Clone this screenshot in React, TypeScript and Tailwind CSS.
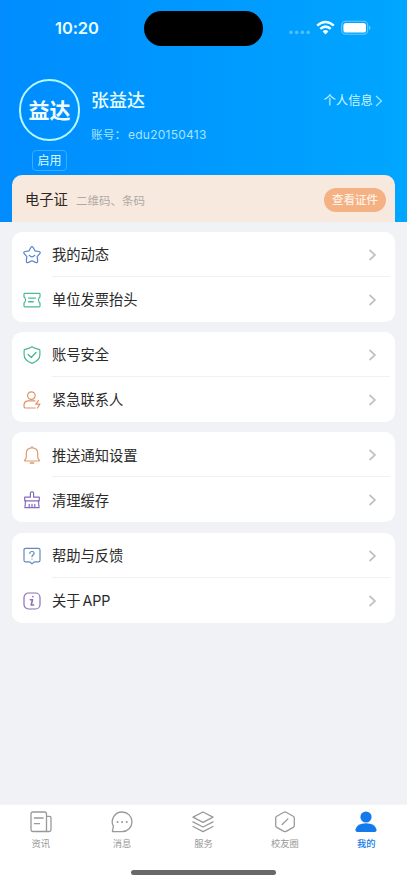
import React from 'react'

interface MenuItem {
  label: string
  icon: React.ReactNode
}

interface TabItem {
  label: string
  icon: React.ReactNode
  active?: boolean
}

function Icon({ children, color }: { children: React.ReactNode; color: string }) {
  return (
    <svg
      className="h-[18px] w-[18px] shrink-0"
      viewBox="0 0 18 18"
      fill="none"
      stroke={color}
      strokeWidth="1.2"
      strokeLinecap="round"
      strokeLinejoin="round"
    >
      {children}
    </svg>
  )
}

const menuIcons = {
  star: (
    <Icon color="#5b80cf">
      <path d="M7.8 1.5Q9 -.3 10.2 1.5L11.9 4.8 15.9 5.5Q18.1 6.2 16.6 7.9L14.1 10.7 14.7 14.8Q14.7 17.2 12.6 16.4L9 14.8 5.4 16.4Q3.3 17.2 3.3 14.8L3.9 10.7 1.4 7.9Q-.1 6.2 2.1 5.5L6.1 4.8Z" />
      <path d="M6.4 9.4Q9 12.4 11.6 9.4" strokeWidth="1.4" />
    </Icon>
  ),
  ticket: (
    <Icon color="#4cb895">
      <path d="M1.8 2.3H16.2Q17 2.3 17 3.1V5.6Q16.9 6.4 16 7 14.8 8.9 16 11 16.9 11.6 17 12.4V15Q17 15.8 16.2 15.8H1.8Q1 15.8 1 15V12.4Q1.1 11.6 2 11 3.2 8.9 2 7 1.1 6.4 1 5.6V3.1Q1 2.3 1.8 2.3Z" />
      <path d="M5.6 7.1H12.4M5.6 10.7H10.2" strokeWidth="1.4" />
    </Icon>
  ),
  shield: (
    <Icon color="#4cb895">
      <path d="M9 .7Q12 2.7 16 3.3 16.9 3.5 16.9 4.4V8.8C16.9 13 13.2 15.9 9 17.4 4.8 15.9 1.1 13 1.1 8.8V4.4Q1.1 3.5 2 3.3 6 2.7 9 .7Z" />
      <path d="M5.2 8.6 8.3 11.5 13 6.6" strokeWidth="1.4" />
    </Icon>
  ),
  contact: (
    <Icon color="#e0916a">
      <circle cx="8.4" cy="4.6" r="3.8" />
      <path d="M12 9.8H4.8Q1 10.2 1 14.4V15.4Q1 17 2.8 17H12.2" />
      <path d="M15.4 9.6 12.8 13.2H16.9L14.4 17" />
    </Icon>
  ),
  bell: (
    <Icon color="#dc9970">
      <path d="M1.9 15Q1.1 15 1.8 14.2 3.3 12.6 3.3 10.6V7.4Q3.3 1.8 9 1.8T14.7 7.4V10.6Q14.7 12.6 16.2 14.2 16.9 15 16.1 15Z" />
      <path d="M9 .8V1.6M7.3 17H10.7" strokeWidth="1.4" />
    </Icon>
  ),
  brush: (
    <Icon color="#8869bd">
      <path d="M7.4 6.2V2Q7.4 .9 9 .9T10.6 2V6.2H16.3V9.8H1.7V6.2Z" />
      <path d="M2.6 9.8 1.9 16.7H16.1L15.4 9.8M6.2 16.5V13.4M9 16.5V13.4M11.8 16.5V13.4" />
    </Icon>
  ),
  help: (
    <Icon color="#648abd">
      <path d="M2.6 1.3H15.4Q17 1.3 17 2.9V13.2Q17 14.8 15.4 14.8H11.6L9 16.8 6.4 14.8H2.6Q1 14.8 1 13.2V2.9Q1 1.3 2.6 1.3Z" />
      <path d="M6.8 6.5Q6.9 4.5 9 4.5T11.2 6.3Q11.2 7.4 9.9 8.1 9 8.6 9 9.7M9 12V12.1" />
    </Icon>
  ),
  about: (
    <Icon color="#8c6fb8">
      <rect x="1" y="1" width="16" height="16" rx="4.5" />
      <path d="M9.9 4.6V4.7M7.3 7.8H9.5L8.2 13H10.6" strokeWidth="1.6" />
    </Icon>
  ),
}

const menuGroups: MenuItem[][] = [
  [
    { label: '我的动态', icon: menuIcons.star },
    { label: '单位发票抬头', icon: menuIcons.ticket },
  ],
  [
    { label: '账号安全', icon: menuIcons.shield },
    { label: '紧急联系人', icon: menuIcons.contact },
  ],
  [
    { label: '推送通知设置', icon: menuIcons.bell },
    { label: '清理缓存', icon: menuIcons.brush },
  ],
  [
    { label: '帮助与反馈', icon: menuIcons.help },
    { label: '关于 APP', icon: menuIcons.about },
  ],
]

function TabIcon({ children }: { children: React.ReactNode }) {
  return (
    <svg
      className="h-[22px] w-[22px]"
      viewBox="0 0 22 22"
      fill="none"
      stroke="currentColor"
      strokeWidth="1.3"
      strokeLinecap="round"
      strokeLinejoin="round"
    >
      {children}
    </svg>
  )
}

const tabs: TabItem[] = [
  {
    label: '资讯',
    icon: (
      <TabIcon>
        <path d="M16.5 20.5H3Q1 20.5 1 18.5V3Q1 1 3 1H14.5Q16.5 1 16.5 3V20.5H19.3Q21 20.5 21 18.8V7Q21 5.3 19.3 5.3H16.5" />
        <path d="M4.4 7H13.2M4.4 12.7H9.5" />
      </TabIcon>
    ),
  },
  {
    label: '消息',
    icon: (
      <TabIcon>
        <path d="M11.2 1A9.8 9.8 0 1 1 11.2 20.6H2Q1.2 20.6 1.5 19.8L2.4 15.4A9.8 9.8 0 0 1 11.2 1Z" />
        <path d="M6.5 11H6.6M11.1 11H11.2M15.7 11H15.8" strokeWidth="1.9" />
      </TabIcon>
    ),
  },
  {
    label: '服务',
    icon: (
      <TabIcon>
        <path d="M11 1 21 6.2 11 11.4 1 6.2ZM1 10.8 11 16 21 10.8M1 15.5 11 20.7 21 15.5" />
      </TabIcon>
    ),
  },
  {
    label: '校友圈',
    icon: (
      <TabIcon>
        <path d="M9.9 1.3Q11 .7 12.1 1.3L19.2 5.2Q20.3 5.8 20.3 7V14.6Q20.3 15.8 19.2 16.4L12.1 20.4Q11 21 9.9 20.4L2.8 16.4Q1.7 15.8 1.7 14.6V7Q1.7 5.8 2.8 5.2Z" />
        <path d="M8.2 13.5 13.9 7.9" />
      </TabIcon>
    ),
  },
  {
    label: '我的',
    active: true,
    icon: (
      <TabIcon>
        <g fill="currentColor" stroke="none">
          <circle cx="11" cy="6" r="5.6" />
          <path d="M.6 18.3Q2 12.3 11 12.3T21.4 18.3Q22 21 19.5 21H2.5Q0 21 .6 18.3Z" />
        </g>
      </TabIcon>
    ),
  },
]

function StatusBar() {
  return (
    <div className="flex h-[57px] items-start text-[#e9fdff]">
      <div className="w-[144px] pt-[16px] pl-[55px] font-['Inter'] text-[16.5px] leading-6 font-semibold tracking-[-0.1px]">
        10:20
      </div>
      <div className="mt-[11px] h-[35px] w-[119px] rounded-full bg-black" />
      <div className="flex pt-[20px] pl-[26px]">
        <svg className="h-4 w-[22px]" viewBox="0 0 22 16" fill="#52bdff">
          <circle cx="2" cy="12.4" r="1.8" />
          <circle cx="7.7" cy="12.4" r="1.8" />
          <circle cx="13.4" cy="12.4" r="1.8" />
          <circle cx="19.2" cy="12.4" r="1.8" />
        </svg>
        <svg className="ml-[5px] h-4 w-[19px]" viewBox="0 0 19 16" fill="none" stroke="#f2ffff" strokeWidth="2.5">
          <path d="M1.2 5.6Q9.5-1.5 17.8 5.6M4.3 8.9Q9.5 4.4 14.7 8.9" />
          <path d="M6.6 11.4Q9.5 8.8 12.4 11.4L9.5 14.4Z" fill="#f2ffff" stroke="none" />
        </svg>
        <svg className="ml-[6px] h-4 w-[30px]" viewBox="0 0 30 16">
          <rect x="0.7" y="1.2" width="26" height="13" rx="4" fill="none" stroke="#66c9ff" strokeWidth="1.1" />
          <rect x="2.4" y="3" width="22.6" height="9.5" rx="2.6" fill="#fff" />
          <path d="M28 5.6Q29.5 6.2 29.5 7.8T28 10Z" fill="#66c9ff" />
        </svg>
      </div>
    </div>
  )
}

function Profile() {
  return (
    <div className="flex h-[118px] pt-[22px] pl-[19px]">
      <div className="flex w-[61px] flex-col items-center">
        <div className="flex h-[62px] w-[61px] shrink-0 items-center justify-center rounded-full border-2 border-[#b5faff] pt-[2px] text-[21px] font-bold text-[#f2ffff]">
          益达
        </div>
        <div className="mt-[9px] flex h-[21px] w-[35px] items-center justify-center rounded-[4px] border border-[#38adff] text-xs whitespace-nowrap text-[#dcfbff]">
          启用
        </div>
      </div>
      <div className="pt-[9px] pl-[11px]">
        <div className="text-[18px] leading-[26px] font-medium text-[#e5fdff]">张益达</div>
        <div className="mt-[12px] flex text-[11.8px] leading-[18px] text-[#a5e3ff]">
          <span className="w-[37px] whitespace-nowrap">账号：</span>
          <span className="font-['Inter'] text-[12px] tracking-[0.25px]">edu20150413</span>
        </div>
      </div>
      <div className="mr-[24px] ml-auto flex h-5 items-center pt-[22px] text-[12.4px] text-[#cdf5ff]">
        个人信息
        <svg className="ml-[2px] h-3 w-[8px]" viewBox="0 0 8 12" fill="none" stroke="#9ee4ff" strokeWidth="1.2">
          <path d="M1 1 6.5 6 1 11" />
        </svg>
      </div>
    </div>
  )
}

function CertificateCard() {
  return (
    <div className="mx-3 flex h-[47px] items-center rounded-t-[10px] bg-[#f7e9de] pt-[3px] pr-[9px] pl-[13px]">
      <span className="text-[14.3px] text-[#302822]">电子证</span>
      <span className="ml-[8px] pt-[3px] text-[11.5px] text-[#b2a9a3]">二维码、条码</span>
      <button className="ml-auto h-6 w-[62px] rounded-full bg-[#f4b183] pt-px text-[11.5px] font-medium text-[#fff2e4]">
        查看证件
      </button>
    </div>
  )
}

function MenuRow({ item, divider }: { item: MenuItem; divider: boolean }) {
  return (
    <div className="flex h-[45px] pl-[11px]">
      <div className="flex w-[29px] items-center pt-px">{item.icon}</div>
      <div
        className={`mr-[5px] flex flex-1 items-center justify-between border-b pt-[2px] ${
          divider ? 'border-[#f1f1f1]' : 'border-transparent'
        }`}
      >
        <span className="text-[14.3px] tracking-[-0.05px] text-[#2a2a2a] [word-spacing:-2px]">{item.label}</span>
        <svg className="mr-[13px] h-3 w-[9px]" viewBox="0 0 9 12" fill="none" stroke="#c2c2c4" strokeWidth="1.7">
          <path d="M1.5 1 7 6 1.5 11" />
        </svg>
      </div>
    </div>
  )
}

function TabBar() {
  return (
    <div className="mt-auto h-[79px] border-t border-[#f5f5f5] bg-white">
      <div className="grid h-[65px] grid-cols-5 pt-[6px]">
        {tabs.map((tab) => (
          <div
            key={tab.label}
            className={`flex flex-col items-center ${tab.active ? 'font-medium text-[#1479ea]' : 'text-[#999]'}`}
          >
            {tab.icon}
            <span className="mt-[4px] text-[9.3px] leading-[14px]">{tab.label}</span>
          </div>
        ))}
      </div>
      <div className="mx-auto h-[5px] w-[145px] rounded-full bg-[#686868]" />
    </div>
  )
}

export default function App() {
  return (
    <div className="flex h-[883px] w-[407px] flex-col overflow-hidden bg-[#f0f2f5] font-['Inter','Noto_Sans_CJK_SC',sans-serif]">
      <header className="h-[222px] shrink-0 bg-linear-to-r from-[#008cff] to-[#00a6ff]">
        <StatusBar />
        <Profile />
        <CertificateCard />
      </header>
      <main className="flex flex-col gap-[10.4px] px-3 pt-[9.5px]">
        {menuGroups.map((group) => (
          <section key={group[0].label} className="rounded-[10px] bg-white">
            {group.map((item, i) => (
              <MenuRow key={item.label} item={item} divider={i < group.length - 1} />
            ))}
          </section>
        ))}
      </main>
      <TabBar />
    </div>
  )
}
